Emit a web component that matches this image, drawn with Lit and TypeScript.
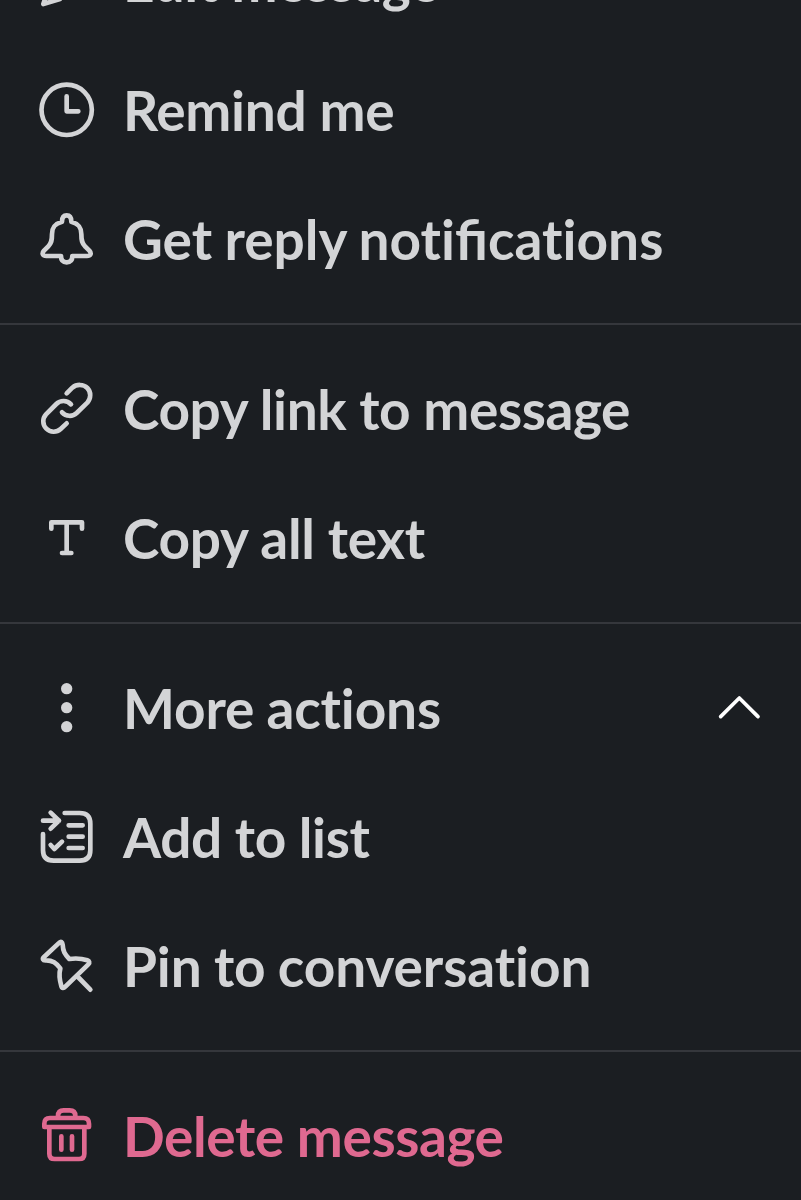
import { LitElement, html, css, svg, nothing } from "lit";
import { customElement, property } from "lit/decorators.js";
import { styleMap } from "lit/directives/style-map.js";

const icons: Record<string, { box: string; art: unknown }> = {
  edit: {
    box: "48 -147 180 180",
    art: svg`<path d="M70 12L86 -36L176 -126Q190 -136 202 -124T204 -98L120 -3Z"/>`,
  },
  clock: {
    box: "48 30 180 180",
    art: svg`<circle cx="140" cy="119.500" r="75.500"/><path d="M140 79V124H175"/>`,
  },
  bell: {
    box: "48 27 180 180",
    art: svg`<path d="M126 65C126 51 131 46 140 46S154 51 154 65C174 71 184 80 184 102C184 122 186 131 196 140L208 152C216 161 211 168 201 168H157C157 181 150 187 140 187S123 181 123 168H79C69 168 64 161 72 152L84 140C94 131 96 122 96 102C96 80 106 71 126 65Z"/>`,
  },
  link: {
    box: "48 27 180 180",
    art: svg`<path d="M140 70L157 53C170 42 190 42 202 54S213 85 202 98L170 129C157 141 138 140 126 127M153 103C141 90 121 90 109 102L78 133C67 145 67 164 79 176S110 188 122 177L140 160"/>`,
  },
  text: {
    box: "48 24 180 180",
    art: svg`<path d="M94 86V67H186V86M140 67V159M126 159H154"/>`,
  },
  dots: {
    box: "48 24 180 180",
    art: svg`<g fill="currentColor" stroke="none"><circle cx="140" cy="56" r="17"/><circle cx="140" cy="113" r="17"/><circle cx="140" cy="170" r="17"/></g>`,
  },
  list: {
    box: "48 21 180 180",
    art: svg`<path d="M134 39H179C200 39 211 50 211 71V151C211 172 200 182 179 182H101C80 182 69 172 69 151V102M69 62H117M92 38L117 62L92 86M146 76H188M146 110H188M146 144H188M92 135L103 147L126 125"/>`,
  },
  pin: {
    box: "48 33 180 180",
    art: svg`<path d="M118 53L72 96C66 102 69 106 76 106C98 105 109 115 121 130C116 149 119 166 124 183C126 190 131 190 136 185L205 118C210 112 208 108 202 106C184 100 167 99 148 102C134 88 129 79 128 59C127 50 123 48 118 53ZM174 156L211 194"/>`,
  },
  trash: {
    box: "48 33 180 180",
    art: svg`<path d="M88 99V176Q88 192 104 192H177Q193 192 193 176V99M114 69V63Q114 46 131 46H149Q166 46 166 63V69M73 96V86Q73 69 90 69H190Q207 69 207 86V96ZM124 124V164M156 124V164"/>`,
  },
  up: {
    box: "24 -6 180 180",
    art: svg`<path stroke-width="11" d="M59 110L115 54L171 110"/>`,
  },
};

@customElement("menu-icon")
class MenuIcon extends LitElement {
  @property() name = "";
  static styles = css`
    :host { display: block; flex: none; width: 60px; height: 60px; }
    svg {
      display: block; width: 60px; height: 60px;
      fill: none; stroke: currentColor; stroke-width: 14;
      stroke-linecap: round; stroke-linejoin: round;
    }
  `;
  render() {
    const icon = icons[this.name];
    return html`<svg viewBox=${icon.box} aria-hidden="true">${icon.art}</svg>`;
  }
}

interface Item {
  icon: string;
  label: unknown;
  tracking?: number;
  wordGap?: number;
  danger?: boolean;
  expanded?: boolean;
}

const groups: Item[][] = [
  [
    { icon: "edit", label: "Edit message", tracking: -0.25 },
    { icon: "clock", label: "Remind me", tracking: -0.3 },
    {
      icon: "bell",
      label: html`Get reply noti<span class="ligature">fi</span>cations`,
      tracking: 0,
      wordGap: -1,
    },
  ],
  [
    { icon: "link", label: "Copy link to message" },
    { icon: "text", label: "Copy all text", tracking: -0.3 },
  ],
  [
    { icon: "dots", label: "More actions", tracking: -0.15, wordGap: -1 },
    { icon: "list", label: "Add to list" },
    { icon: "pin", label: "Pin to conversation", tracking: -0.1, wordGap: -1 },
  ],
  [{ icon: "trash", label: "Delete message", danger: true }],
];
groups[2][0].expanded = true;

@customElement("app-root")
class AppRoot extends LitElement {
  static styles = css`
    :host {
      display: flex; flex-direction: column; justify-content: flex-end;
      height: 1200px; overflow: hidden;
      background: #1b1e22; color: #d3d4d6;
      font: 700 55px/66px Lato, sans-serif;
    }
    .group { flex: none; padding-bottom: 19px; }
    .group + .group { border-top: 2px solid #35373c; padding-top: 20px; }
    .group:last-child { padding-bottom: 0; margin-bottom: -0.5px; }
    .item {
      display: flex; align-items: center; box-sizing: border-box;
      height: 129px; padding: 0 32px 0 36px;
    }
    .label {
      flex: 1; margin-left: 27px; white-space: nowrap;
      font-variant-ligatures: none;
    }
    .ligature { letter-spacing: 0; font-variant-ligatures: common-ligatures; }
    .danger { color: #df6990; }
    .chevron { color: #fff; }
  `;
  render() {
    return groups.map(
      (items) => html`<div class="group" role="group">
        ${items.map(
          (i) => html`<div class="item ${i.danger ? "danger" : ""}" role="menuitem">
            <menu-icon name=${i.icon}></menu-icon>
            <span
              class="label"
              style=${styleMap({
                letterSpacing: `${i.tracking ?? -0.4}px`,
                wordSpacing: `${i.wordGap ?? 0}px`,
              })}
              >${i.label}</span
            >
            ${i.expanded ? html`<menu-icon class="chevron" name="up"></menu-icon>` : nothing}
          </div>`
        )}
      </div>`
    );
  }
}
